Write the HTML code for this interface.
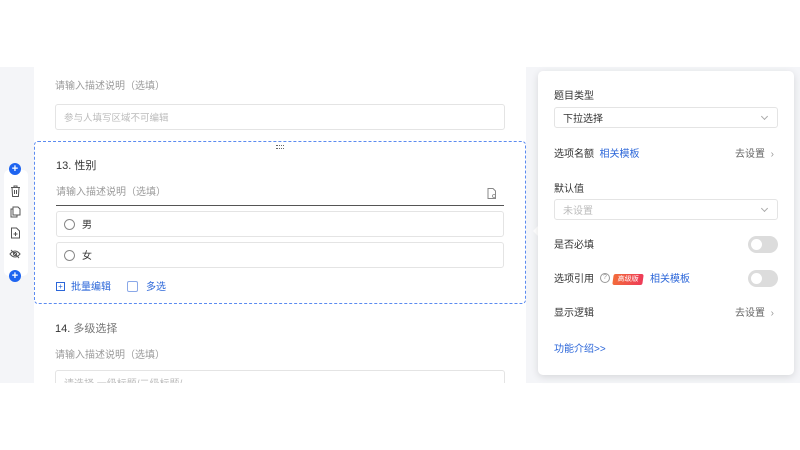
<!DOCTYPE html>
<html><head><meta charset="utf-8"><style>
*{box-sizing:border-box;margin:0;padding:0}
body{width:800px;height:450px;background:#fff;position:relative;overflow:hidden;font-family:"Liberation Sans","Noto Sans CJK SC",sans-serif;font-size:10px;line-height:16px;color:#333}
.abs{position:absolute}
.gray{left:0;top:67px;width:800px;height:316px;background:#f4f5f8}
.card{left:34px;top:67px;width:492px;height:316px;background:#fff;overflow:hidden}
.ph{color:#9a9a9a;font-size:10px}
.box{border:1px solid #e4e4e4;border-radius:3px;background:#fff;display:flex;align-items:center}
.box span.t{position:relative;top:2px}
.sel{left:34px;top:141px;width:492px;height:163px;border:1px dashed #5b8bf0;border-radius:4px;background:#fff}
.tool{left:4px;top:170px;width:24px;height:106px;background:#fff;border-radius:5px}
.plus{width:12px;height:12px;border-radius:50%;background:#1e64f0;color:#fff;font-size:11px;line-height:12px;text-align:center;font-weight:bold}
.panel{left:538px;top:71px;width:256px;height:304px;background:#fff;border-radius:5px;box-shadow:0 2px 8px rgba(0,0,0,.12)}
.lbl{font-size:10px;color:#333}
.blue{color:#2b66d9}
.tog{width:30px;height:17px;border-radius:9px;background:#dcdcdc}
.tog:after{content:"";position:absolute;left:3px;top:3px;width:11px;height:11px;border-radius:50%;background:#fff}
.radio{width:11px;height:11px;border:1px solid #888;border-radius:50%;margin:0 7px 0 7px;flex:none}
.chev{position:absolute;right:10px;top:6px;width:5px;height:5px;border-right:1px solid #aaa;border-bottom:1px solid #aaa;transform:rotate(45deg)}
.row{display:flex;align-items:center}
.row .t{position:relative;top:2px}
</style></head><body>
<div class="abs gray"></div>
<div class="abs card">
  <div class="abs ph" style="left:21px;top:12px">请输入描述说明（选填）</div>
  <div class="abs box" style="left:21px;top:37px;width:450px;height:26px"><span class="t" style="margin-left:8px;color:#bbb;font-size:9.5px">参与人填写区域不可编辑</span></div>
  <div class="abs lbl" style="left:21px;top:254px;font-size:11px">14. <span style="color:#777">多级选择</span></div>
  <div class="abs ph" style="left:21px;top:281px">请输入描述说明（选填）</div>
  <div class="abs box" style="left:21px;top:303px;width:450px;height:26px;align-items:flex-start"><span style="margin:6px 0 0 8px;color:#bbb">请选择 一级标题/二级标题/</span></div>
</div>
<div class="abs sel">
  <div class="abs" style="left:241px;top:3px;width:8px;height:4px;border-top:1px dotted #666;border-bottom:1px dotted #666"></div>
  <div class="abs lbl" style="left:21px;top:16px;font-size:11px">13. 性别</div>
  <div class="abs ph" style="left:21px;top:43px">请输入描述说明（选填）</div>
  <svg class="abs" style="left:452px;top:46px" width="10" height="11" viewBox="0 0 10 11"><path d="M1 .5h5l2.5 2.5v7.5h-7.5z" fill="none" stroke="#888"/><circle cx="7" cy="8" r="1.5" fill="none" stroke="#888" stroke-width=".8"/></svg>
  <div class="abs" style="left:21px;top:63px;width:448px;height:1px;background:#555"></div>
  <div class="abs box" style="left:21px;top:69px;width:448px;height:26px"><div class="radio"></div><span class="t">男</span></div>
  <div class="abs box" style="left:21px;top:100px;width:448px;height:26px"><div class="radio"></div><span class="t">女</span></div>
  <div class="abs blue row" style="left:21px;top:136px"><span style="display:inline-block;width:9px;height:9px;border:1px solid #2b66d9;font-size:8px;line-height:7px;text-align:center;margin-right:6px">+</span><span class="t">批量编辑</span></div>
  <div class="abs blue row" style="left:92px;top:136px"><span style="display:inline-block;width:11px;height:11px;border:1px solid #8aa8e8;border-radius:2px;margin-right:8px"></span><span class="t">多选</span></div>
</div>
<div class="abs tool"></div>
<div class="abs plus" style="left:9px;top:163px">+</div>
<svg class="abs" style="left:10px;top:185px" width="11" height="12" viewBox="0 0 11 12" fill="none" stroke="#555"><path d="M1 2.5h9M4 2.5V1h3v1.5M2 2.5l.6 9h5.8l.6-9M4.5 5v4M6.5 5v4"/></svg>
<svg class="abs" style="left:10px;top:206px" width="11" height="12" viewBox="0 0 11 12" fill="none" stroke="#555"><path d="M3 1h5l2 2v6H3zM3 3H1v8h6V9"/></svg>
<svg class="abs" style="left:10px;top:227px" width="11" height="12" viewBox="0 0 11 12" fill="none" stroke="#555"><path d="M1.5 1h5l3 3v7h-8zM5.5 5v4M3.5 7h4"/></svg>
<svg class="abs" style="left:9px;top:249px" width="12" height="10" viewBox="0 0 12 10" fill="none" stroke="#555"><path d="M1 5q5-6 10 0q-5 6-10 0z"/><circle cx="6" cy="5" r="1.6"/><path d="M2 1l8 8"/></svg>
<div class="abs plus" style="left:9px;top:270px">+</div>
<div class="abs" style="left:533px;top:225px;width:0;height:0;border-top:6px solid transparent;border-bottom:6px solid transparent;border-right:6px solid #fff"></div>
<div class="abs panel">
  <div class="abs lbl" style="left:16px;top:18px">题目类型</div>
  <div class="abs box" style="left:16px;top:36px;width:224px;height:21px"><span class="t" style="margin-left:8px">下拉选择</span><span class="chev"></span></div>
  <div class="abs lbl" style="left:16px;top:76px">选项名额 <span class="blue">&nbsp;相关模板</span></div>
  <div class="abs" style="left:197px;top:76px;color:#666">去设置 &nbsp;<span style="color:#999">›</span></div>
  <div class="abs lbl" style="left:16px;top:111px">默认值</div>
  <div class="abs box" style="left:16px;top:128px;width:224px;height:21px"><span class="t" style="margin-left:8px;color:#bbb">未设置</span><span class="chev"></span></div>
  <div class="abs lbl" style="left:16px;top:167px">是否必填</div>
  <div class="abs tog" style="left:210px;top:165px"></div>
  <div class="abs lbl row" style="left:16px;top:199px"><span class="t">选项引用</span><span style="display:inline-block;width:10px;height:10px;border:1px solid #999;border-radius:50%;font-size:7px;line-height:8px;text-align:center;color:#999;margin-left:6px">?</span></div>
  <div class="abs" style="left:75px;top:203px;width:30px;height:11px;background:linear-gradient(90deg,#f26b3a,#ee3b58);border-radius:2px;color:#fff;font-size:7px;line-height:11px;text-align:center;transform:skewX(-8deg)">高级版</div>
  <div class="abs blue" style="left:112px;top:201px">相关模板</div>
  <div class="abs tog" style="left:210px;top:199px"></div>
  <div class="abs lbl" style="left:16px;top:235px">显示逻辑</div>
  <div class="abs" style="left:197px;top:235px;color:#666">去设置 &nbsp;<span style="color:#999">›</span></div>
  <div class="abs blue" style="left:16px;top:271px">功能介绍&gt;&gt;</div>
</div>
</body></html>
